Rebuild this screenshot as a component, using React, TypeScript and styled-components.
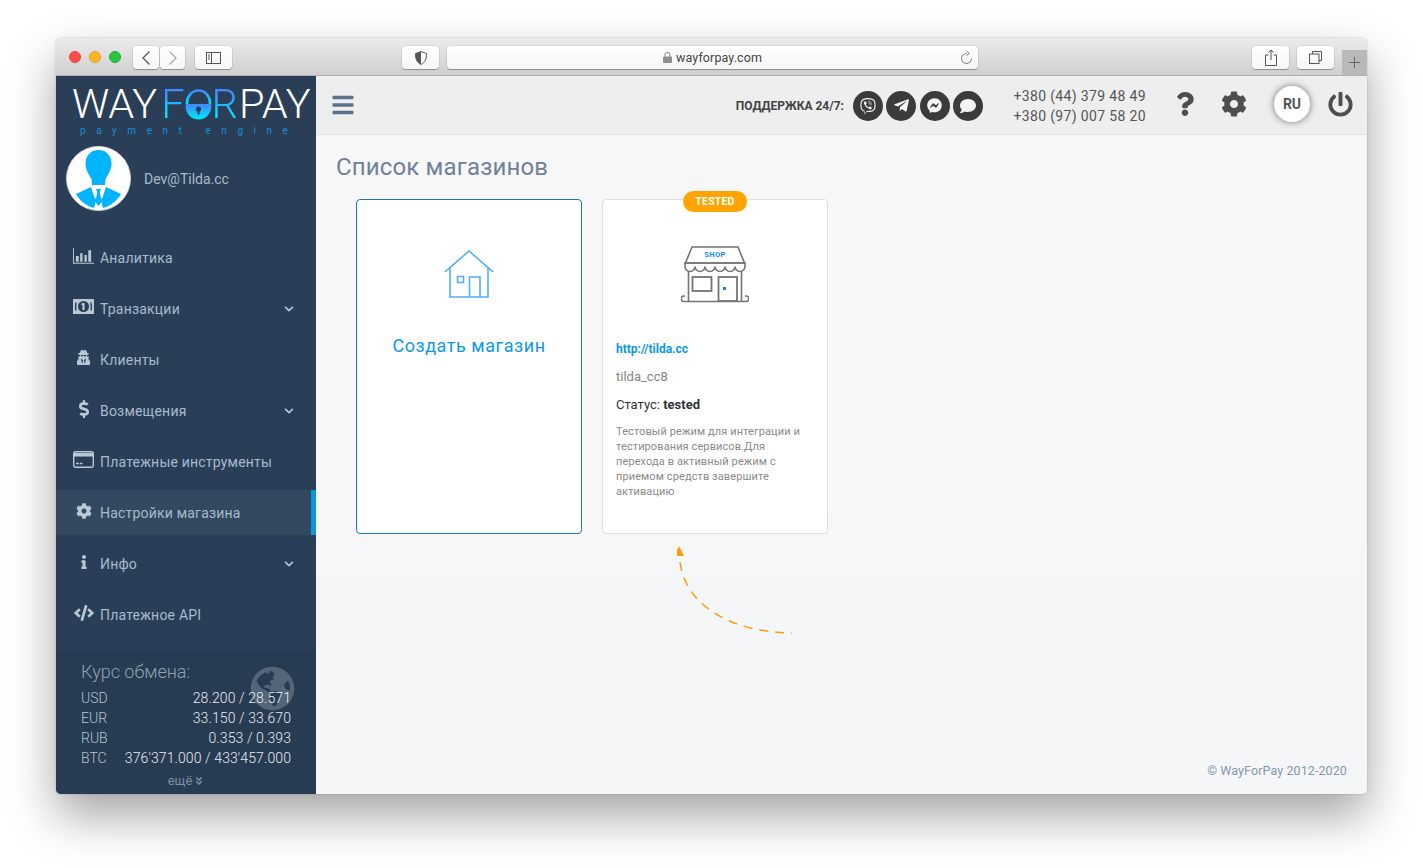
import React from "react";
import styled, { createGlobalStyle } from "styled-components";
import {
  FaBars, FaQuestion, FaCog, FaPowerOff, FaViber, FaTelegramPlane, FaFacebookMessenger, FaComment,
  FaUserSecret, FaDollarSign, FaInfo, FaCode, FaChevronDown, FaAngleDoubleDown, FaGlobeAmericas,
} from "react-icons/fa";

const Global = createGlobalStyle`
  html, body { margin: 0; padding: 0; background: #fff; }
  body { font-family: Roboto, "Liberation Sans", sans-serif; }
  * { box-sizing: border-box; }
`;

const Page = styled.div`
  width: 1423px; height: 868px; padding: 38px 56px 74px; overflow: hidden;
`;
const Win = styled.div`
  height: 756px; display: flex; flex-direction: column; border-radius: 5px; overflow: hidden;
  box-shadow: 0 22px 48px rgba(0,0,0,.36), 0 0 2px rgba(0,0,0,.25);
`;
const TitleBar = styled.div`
  height: 38px; flex: none; display: flex; align-items: flex-start; padding-top: 8px; position: relative;
  background: linear-gradient(#ebebeb, #d0d0d0); border-bottom: 1px solid #b1b1b1;
`;
const Light = styled.span<{ $c: string; $b: string }>`
  width: 12px; height: 12px; border-radius: 50%; background: ${p => p.$c}; border: 1px solid ${p => p.$b};
  margin: 5px 8px 0 0;
`;
const Lights = styled.div` display: flex; padding-left: 13px; width: 77px; flex: none; `;
const TBtn = styled.div<{ $w: number; $ml: number }>`
  width: ${p => p.$w}px; margin-left: ${p => p.$ml}px; height: 23px; flex: none; border-radius: 4px;
  background: linear-gradient(#fff, #f6f6f6); box-shadow: 0 1px 1px rgba(0,0,0,.3), 0 0 0 .5px rgba(0,0,0,.1);
  display: flex; align-items: center; justify-content: center; color: #555;
`;
const UrlBar = styled(TBtn)`
  position: relative; gap: 4px; font-size: 12.5px; color: #444; letter-spacing: .1px;
`;
const Reload = styled.span`
  position: absolute; right: 5px; top: 4px; display: flex; color: #777;
`;
const PlusTab = styled.div`
  position: absolute; right: 0; top: 12px; width: 25px; height: 25px; background: #b9b9b9; color: #666;
  display: flex; align-items: center; justify-content: center;
`;
const Body = styled.div` flex: 1; display: flex; min-height: 0; `;
const Sidebar = styled.aside`
  width: 260px; flex: none; background: #2a3f57; display: flex; flex-direction: column;
`;
const LogoBlock = styled.div` height: 65px; padding: 6px 0 0 16px; flex: none; `;
const LogoWord = styled.div`
  display: flex; align-items: center; height: 44px; font-size: 41.5px; font-weight: 300; color: #fff; line-height: 44px;
`;
const Grad = styled.span`
  background: linear-gradient(#3d8dff 25%, #00e4ff 75%); -webkit-background-clip: text; background-clip: text; color: transparent;
`;
const Tagline = styled.div`
  font-size: 10px; color: #108fdb; letter-spacing: 10.55px; margin: -1px 0 0 8px; white-space: pre; line-height: 12px;
`;
const UserRow = styled.div`
  display: flex; align-items: center; height: 65px; margin: 5px 0 24px 10px; gap: 13px; flex: none;
  color: #a9b8c9; font-size: 14px;
`;
const Avatar = styled.svg` width: 65px; height: 65px; display: block; `;
const Menu = styled.nav` display: flex; flex-direction: column; gap: 6px; flex: none; `;
const Row = styled.div<{ $active?: boolean }>`
  height: 45px; display: flex; align-items: center; padding-left: 17px; font-size: 14px; letter-spacing: .2px;
  color: #a8bacd; background: ${p => (p.$active ? "#34495f" : "transparent")};
  border-right: 5px solid ${p => (p.$active ? "#0b96e5" : "transparent")};
`;
const RowIcon = styled.span`
  width: 27px; flex: none; display: flex; justify-content: center; padding-right: 6px; margin-top: -4px; color: #b9c7d6;
`;
const RowLabel = styled.span` flex: 1; `;
const Chevron = styled.span` display: flex; margin-right: 17px; color: #b9c7d6; `;
const Rates = styled.div`
  margin-top: auto; height: 144px; background: #273b52; padding: 12px 25px 0; position: relative; color: #d6dde5;
`;
const RatesTitle = styled.div`
  font-size: 18px; font-weight: 300; color: #93a3b5; line-height: 20px; margin-bottom: 6px;
`;
const Globe = styled.span`
  position: absolute; left: 194px; top: 16px; color: #546577; display: flex;
`;
const RateRow = styled.div`
  display: flex; justify-content: space-between; height: 20px; line-height: 20px; font-size: 14px; position: relative;
`;
const Cur = styled.span` color: #b8c4d0; font-weight: 300; `;
const Val = styled.span` color: #e9edf1; font-weight: 300; letter-spacing: .1px; `;
const More = styled.div`
  display: flex; justify-content: center; align-items: center; gap: 2px; margin-top: 5px; font-size: 13px; color: #7d8fa3; padding-right: 0;
`;
const Main = styled.main`
  flex: 1; display: flex; flex-direction: column; background: linear-gradient(#f7f7f7 60%, #f5f6f8 70%); min-width: 0;
`;
const Header = styled.header`
  height: 59px; flex: none; display: flex; align-items: center; background: #eeeeee; border-bottom: 1px solid #dfe3ea;
`;
const Burger = styled.span` display: flex; margin-left: 15px; color: #5b7191; margin-right: auto; `;
const Support = styled.b` font-size: 12px; color: #444; font-weight: 700; margin-right: 9px; margin-top: 2px; `;
const Social = styled.div` display: flex; gap: 3.5px; margin-top: 1px; `;
const Circle = styled.span`
  width: 30px; height: 30px; border-radius: 50%; background: #3b3b3b; color: #f4f4f4;
  display: flex; align-items: center; justify-content: center;
`;
const Phones = styled.div`
  margin: 0 30px 0 30px; font-size: 14px; line-height: 20px; color: #555; letter-spacing: .35px; margin-top: 1px;
`;
const HIcon = styled.span<{ $w: number }>`
  width: ${p => p.$w}px; display: flex; justify-content: center; color: #4e4e4e; flex: none; margin-top: -2px;
`;
const Lang = styled.span`
  width: 36px; height: 36px; border-radius: 50%; background: #fff; box-shadow: 0 0 6px 1px rgba(0,0,0,.4);
  display: flex; align-items: center; justify-content: center; font-size: 14px; font-weight: 700; color: #555; margin: -3px 17px 0 15px;
`;
const Content = styled.div` flex: 1; display: flex; flex-direction: column; padding: 17px 20px 16px; min-height: 0; `;
const Title = styled.h1`
  margin: 0; font-size: 24px; line-height: 30px; font-weight: 400; color: #6f8299; letter-spacing: .15px;
`;
const Cards = styled.div` display: flex; gap: 20px; margin: 17px 0 0 20px; `;
const Card = styled.div<{ $new?: boolean }>`
  width: 226px; height: 335px; background: #fff; border-radius: 4px; position: relative;
  border: 1px solid ${p => (p.$new ? "#1b77b5" : "#dfdfdf")};
`;
const NewBody = styled(Card)` display: flex; flex-direction: column; align-items: center; padding-top: 50px; `;
const NewLabel = styled.div` margin-top: 36px; font-size: 18px; line-height: 24px; letter-spacing: .55px; color: #0c9ae4; `;
const Badge = styled.span`
  position: absolute; left: 80px; top: -9px; width: 64px; height: 21px; border-radius: 11px; background: #ffa400;
  color: #fff; font-size: 10.5px; font-weight: 700; letter-spacing: .2px; display: flex; align-items: center; justify-content: center;
`;
const ShopArt = styled.svg` display: block; margin: 46px auto 0; `;
const ShopInfo = styled.div` padding: 0 13px; `;
const Link = styled.div` margin-top: 38px; font-size: 12px; line-height: 16px; font-weight: 700; color: #0c99e4; `;
const Code = styled.div` margin-top: 12px; font-size: 13px; line-height: 16px; color: #858585; `;
const Status = styled.div` margin-top: 12px; font-size: 13px; line-height: 16px; color: #333; b { font-weight: 700; } `;
const Desc = styled.div` margin-top: 11px; font-size: 11px; line-height: 15px; color: #8a8a8a; letter-spacing: .1px; `;
const ArrowArt = styled.svg` display: block; margin: 11px 0 0 341px; flex: none; `;
const Copy = styled.div` margin-top: auto; text-align: right; font-size: 12.5px; color: #8497ac; letter-spacing: .1px; `;

const menu = [
  { label: "Аналитика", icon: (
    <svg width="22" height="18" viewBox="0 0 22 18" fill="currentColor"><path d="M0 1h1v15h21v1H0z" /><path d="M3 9h3v6H3zM7.5 6h2.5v9H7.500zM12 8h2.500v7H12zM16 3h3v12h-3z" /></svg>
  ) },
  { label: "Транзакции", more: true, icon: (
    <svg width="21" height="15" viewBox="0 0 21 15"><path d="M0 0h21v15H0z" fill="currentColor" /><ellipse cx="10.500" cy="7.500" rx="5.500" ry="5.500" fill="#2a3f57" /><path d="M3 3.500c0 2-1 4 0 8M18 3.500c0 2 1 4 0 8" stroke="#2a3f57" strokeWidth="1.400" fill="none" /><path d="M9.500 4h2v7h-2zM8.500 4.500h2v1.500h-2z" fill="#c5d0dc" /></svg>
  ) },
  { label: "Клиенты", icon: <FaUserSecret size={15} /> },
  { label: "Возмещения", more: true, icon: <FaDollarSign size={18} /> },
  { label: "Платежные инструменты", icon: (
    <svg width="21" height="17" viewBox="0 0 21 17" fill="none" stroke="currentColor"><rect x=".7" y=".7" width="19.600" height="15.600" rx="2" strokeWidth="1.400" /><path d="M1 3.800h19" strokeWidth="3.500" /><path d="M3 12.500h3M7 12.500h2.500" strokeWidth="1.300" /></svg>
  ) },
  { label: "Настройки магазина", active: true, icon: <FaCog size={16} /> },
  { label: "Инфо", more: true, icon: <FaInfo size={14} /> },
  { label: "Платежное API", icon: <FaCode size={20} /> },
];

const rates = [
  ["USD", "28.200 / 28.571"],
  ["EUR", "33.150 / 33.670"],
  ["RUB", "0.353 / 0.393"],
  ["BTC", "376'371.000 / 433'457.000"],
];

export default function App() {
  return (
    <Page>
      <Global />
      <Win>
        <TitleBar>
          <Lights>
            <Light $c="#fc4e48" $b="#e0443e" />
            <Light $c="#fdb426" $b="#dea123" />
            <Light $c="#27c73f" $b="#1aab29" />
          </Lights>
          <TBtn $w={26} $ml={0}>
            <svg width="10" height="16" viewBox="0 0 10 16" fill="none" stroke="#555" strokeWidth="1.300"><path d="M8.500 1.500L2 8l6.500 6.500" /></svg>
          </TBtn>
          <TBtn $w={25} $ml={1}>
            <svg width="10" height="16" viewBox="0 0 10 16" fill="none" stroke="#aaa" strokeWidth="1.300"><path d="M1.500 1.500L8 8l-6.500 6.500" /></svg>
          </TBtn>
          <TBtn $w={37} $ml={10}>
            <svg width="15" height="12" viewBox="0 0 15 12" fill="none" stroke="#555"><rect x=".5" y=".5" width="14" height="11" /><path d="M5.500 .5v11M2 3h2M2 5h2M2 7h2" /></svg>
          </TBtn>
          <TBtn $w={37} $ml={170}>
            <svg width="12" height="14" viewBox="0 0 12 14"><path d="M6 .5l5.500 2c0 5-1 8.500-5.500 11-4.500-2.500-5.500-6-5.500-11z" fill="none" stroke="#555" /><path d="M6 .5l-5.500 2c0 5 1 8.500 5.500 11z" fill="#555" /></svg>
          </TBtn>
          <UrlBar $w={531} $ml={8}>
            <svg width="9" height="11" viewBox="0 0 9 11" fill="#8f8f8f"><rect y="4.500" width="9" height="6.500" rx="1" /><path d="M2 5V3a2.500 2.500 0 015 0v2" fill="none" stroke="#8f8f8f" strokeWidth="1.100" /></svg>
            wayforpay.com
            <Reload>
              <svg width="13" height="15" viewBox="0 0 13 15" fill="none" stroke="#777"><path d="M11.500 8.500A5 5 0 116.500 3.500" /><path d="M6.500 1l2.800 2.500-2.800 2" /></svg>
            </Reload>
          </UrlBar>
          <TBtn $w={37} $ml={274}>
            <svg width="12" height="17" viewBox="0 0 12 17" fill="none" stroke="#555"><path d="M3.500 6H.5v10.500h11V6h-3M6 11V1M3.300 3.500L6 1l2.700 2.500" /></svg>
          </TBtn>
          <TBtn $w={37} $ml={8}>
            <svg width="13" height="13" viewBox="0 0 13 13" fill="none" stroke="#555"><path d="M3.500 3V.5h9v9H10" /><rect x=".5" y="3" width="9.500" height="9.500" /></svg>
          </TBtn>
          <PlusTab>
            <svg width="11" height="11" viewBox="0 0 11 11" stroke="#666"><path d="M5.500 0v11M0 5.500h11" /></svg>
          </PlusTab>
        </TitleBar>
        <Body>
          <Sidebar>
            <LogoBlock>
              <LogoWord aria-label="WAYFORPAY">
                <span>WAY</span>
                <Grad style={{ marginLeft: 4 }}>F</Grad>
                <svg width="27" height="31" viewBox="0 0 27 31" style={{ marginTop: 1 }}>
                  <defs>
                    <linearGradient id="lk" x1="0" y1="0" x2="0" y2="1"><stop offset=".1" stopColor="#3d8dff" /><stop offset=".85" stopColor="#00e0ff" /></linearGradient>
                  </defs>
                  <path d="M2 15V14a11.500 12.500 0 0123 0v1" fill="none" stroke="url(#lk)" strokeWidth="2.600" />
                  <path d="M.7 15h25.600v2.500a12.800 13 0 01-25.600 0z" fill="url(#lk)" />
                  <circle cx="13.500" cy="20" r="2.600" fill="#2a3f57" />
                  <path d="M12.500 21h2v4.500h-2z" fill="#2a3f57" />
                </svg>
                <Grad>R</Grad>
                <span style={{ marginLeft: 1 }}>PAY</span>
              </LogoWord>
              <Tagline>payment engine</Tagline>
            </LogoBlock>
            <UserRow>
              <Avatar viewBox="0 0 65 65">
                <circle cx="32.500" cy="32.500" r="32" fill="#fff" stroke="#cfd6dd" strokeWidth="1" />
                <path d="M32.500 4c8 0 13 6 13 13.500 0 6-3 10.500-6 15.500l-.5 6h-13l-.5-6c-3-5-6-9.500-6-15.500C19.500 10 24.500 4 32.500 4z" fill="#00b4ff" />
                <path d="M25 41l-15 7C12 52 19 60 28 62l3-11-2 2zM40 41l15 7c-2 4-9 12-18 14l-3-11 2 2z" fill="#00b4ff" />
                <path d="M30 43h5l-1.200 3 1.700 10-3 4-3-4 1.700-10z" fill="#00b4ff" />
              </Avatar>
              Dev@Tilda.cc
            </UserRow>
            <Menu>
              {menu.map(m => (
                <Row key={m.label} $active={m.active}>
                  <RowIcon>{m.icon}</RowIcon>
                  <RowLabel>{m.label}</RowLabel>
                  {m.more && <Chevron><FaChevronDown size={10} /></Chevron>}
                </Row>
              ))}
            </Menu>
            <Rates>
              <Globe><FaGlobeAmericas size={45} /></Globe>
              <RatesTitle>Курс обмена:</RatesTitle>
              {rates.map(([c, v]) => (
                <RateRow key={c}><Cur>{c}</Cur><Val>{v}</Val></RateRow>
              ))}
              <More>ещё <FaAngleDoubleDown size={10} /></More>
            </Rates>
          </Sidebar>
          <Main>
            <Header>
              <Burger><FaBars size={24} /></Burger>
              <Support>ПОДДЕРЖКА 24/7:</Support>
              <Social>
                <Circle><FaViber size={16} /></Circle>
                <Circle><FaTelegramPlane size={17} /></Circle>
                <Circle><FaFacebookMessenger size={15} /></Circle>
                <Circle><FaComment size={16} /></Circle>
              </Social>
              <Phones>+380 (44) 379 48 49<br />+380 (97) 007 58 20</Phones>
              <HIcon $w={18}><FaQuestion size={24} /></HIcon>
              <HIcon $w={26} style={{ marginLeft: 27 }}><FaCog size={26} /></HIcon>
              <Lang style={{ marginLeft: 27 }}>RU</Lang>
              <HIcon $w={26}><FaPowerOff size={25} /></HIcon>
              <span style={{ width: 14 }} />
            </Header>
            <Content>
              <Title>Список магазинов</Title>
              <Cards>
                <NewBody $new>
                  <svg width="50" height="48" viewBox="0 0 50 48" fill="none" stroke="#50aef8" strokeWidth="1.600">
                    <path d="M.8 22L25 1l24.200 21M6 18v29h38V18" />
                    <rect x="13.500" y="26.500" width="6" height="6" />
                    <path d="M25.500 47V27h10.500v20" />
                  </svg>
                  <NewLabel>Создать магазин</NewLabel>
                </NewBody>
                <Card>
                  <Badge>TESTED</Badge>
                  <ShopArt width="68" height="57" viewBox="0 0 68 57" fill="none" stroke="#747474" strokeWidth="1.600">
                    <path d="M11 1h46l6.500 16H4.500z" />
                    <path d="M4 17h60v3.500a5 5 0 01-10 0 5 5 0 01-10 0 5 5 0 01-10 0 5 5 0 01-10 0 5 5 0 01-10 0 5 5 0 01-10 0z" />
                    <path d="M7.500 25v30M60.500 25v30" />
                    <rect x="11.500" y="31" width="19" height="14" strokeWidth="1.800" />
                    <rect x="37.500" y="31" width="18.500" height="24" strokeWidth="1.800" />
                    <path d="M4 50H3a2.500 2.500 0 000 5.500h62a2.500 2.500 0 000-5.500h-1" />
                    <rect x="42" y="41" width="3" height="3" fill="#0a84ff" stroke="none" />
                    <text x="34" y="11" textAnchor="middle" fontSize="7.500" fontWeight="700" fill="#0a8cf0" stroke="none" fontFamily="Roboto, sans-serif" letterSpacing=".4">SHOP</text>
                  </ShopArt>
                  <ShopInfo>
                    <Link>http://tilda.cc</Link>
                    <Code>tilda_cc8</Code>
                    <Status>Статус: <b>tested</b></Status>
                    <Desc>Тестовый режим для интеграции и тестирования сервисов.Для перехода в активный режим с приемом средств завершите активацию</Desc>
                  </ShopInfo>
                </Card>
              </Cards>
              <ArrowArt width="120" height="90" viewBox="0 0 120 90" fill="none">
                <path d="M2 1l5 10H-3z" fill="#ff9a0a" transform="translate(0 0)" />
                <path d="M3 17C8 58 50 87 115 88" stroke="#ff9a0a" strokeWidth="1.500" strokeDasharray="9 7" />
              </ArrowArt>
              <Copy>© WayForPay 2012-2020</Copy>
            </Content>
          </Main>
        </Body>
      </Win>
    </Page>
  );
}
